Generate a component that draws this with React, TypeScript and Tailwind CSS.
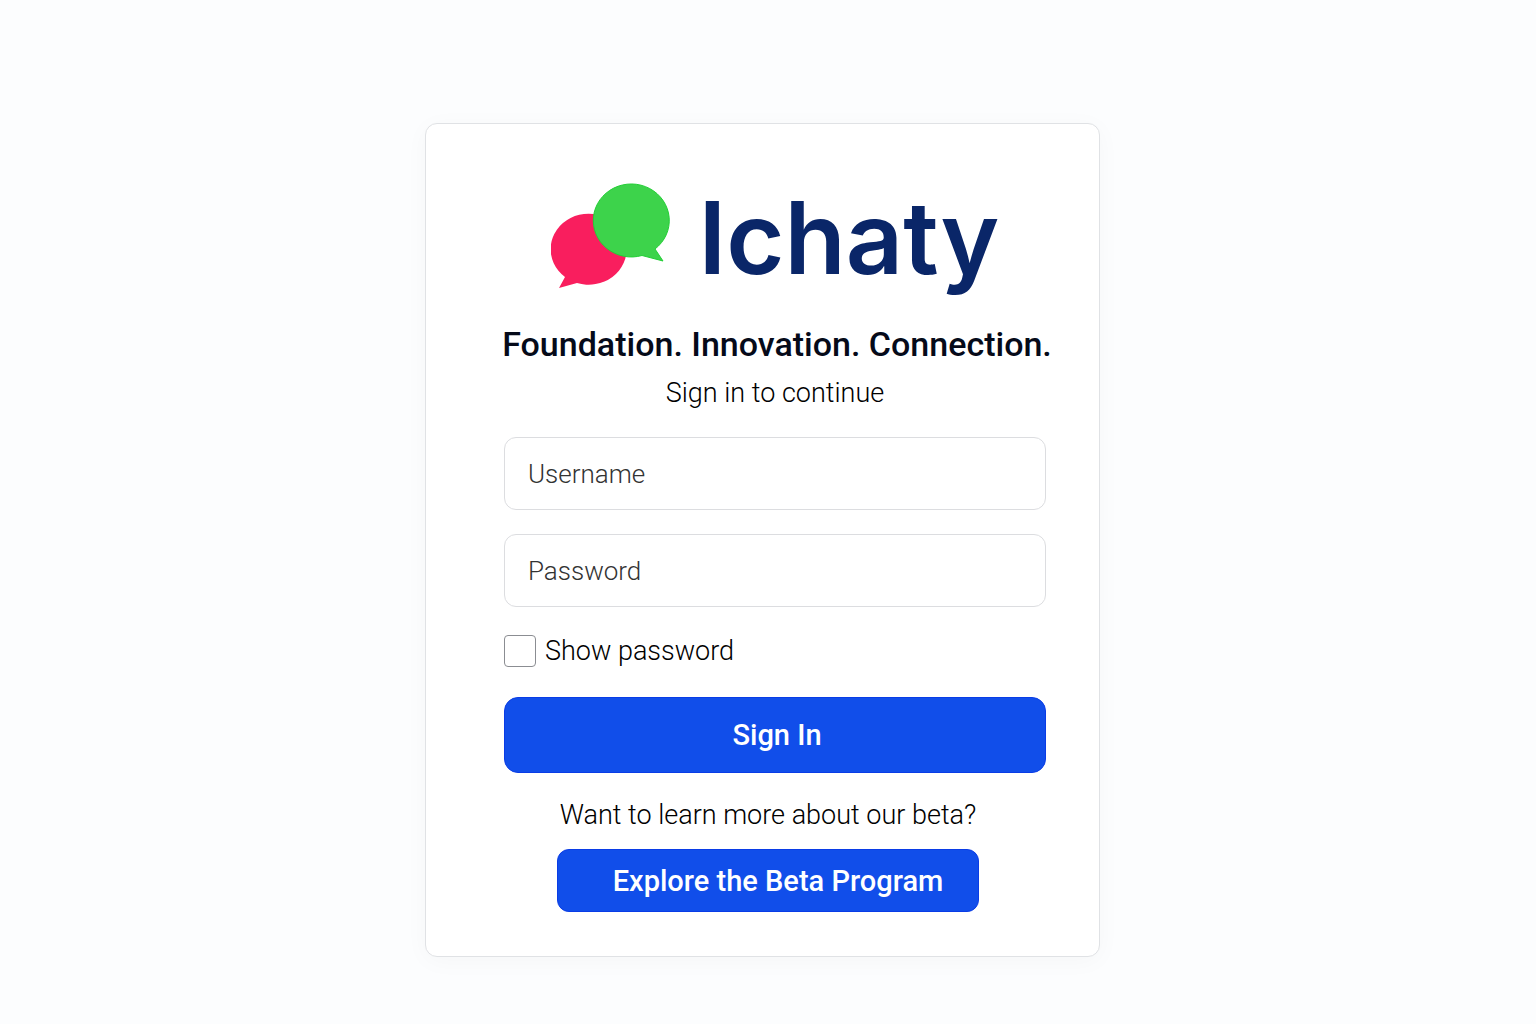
export default function App() {
  return (
    <main className="flex min-h-screen items-start justify-center bg-[#fcfdfe] pt-[123px] pr-[11px] font-[Roboto,sans-serif] text-[#050a19]">
      <section className="flex w-full max-w-[675px] flex-col rounded-xl border border-[#e0e2e5] bg-white pt-[59px] pr-[53px] pb-11 pl-[78px] shadow-[0_4px_24px_rgba(0,0,0,0.03)]">
        <header className="flex flex-col items-center">
          <div className="flex items-start gap-7">
            <svg className="h-[108px] w-[120px]" viewBox="0 0 120 108" aria-hidden="true">
              <path fill="#f91e5e" d="M14 94L8 105L26 100A38 35.5 0 1 0 14 94Z" />
              <path fill="#3dd34b" stroke="#22cf35" strokeWidth="1" d="M104 66L112 78L91 72.5A38 36.5 0 1 1 104 66Z" />
            </svg>
            <h1 className="font-[Inter,sans-serif] text-[100px] leading-[110px] font-semibold text-[#0a2668]">Ichaty</h1>
          </div>
          <p className="mt-[30px] pl-1 text-[34px] leading-[42px] font-medium whitespace-nowrap">Foundation. Innovation. Connection.</p>
          <p className="mt-2.5 text-[27px] leading-9 font-light text-black">Sign in to continue</p>
        </header>
        <form className="mt-[26px] flex flex-col">
          <input aria-label="Username" placeholder="Username" className="h-[73px] rounded-xl border border-[#dcdde0] px-[23px] text-[26px] font-light placeholder:text-[#333]" />
          <input aria-label="Password" type="password" placeholder="Password" className="mt-6 h-[73px] rounded-xl border border-[#dcdde0] px-[23px] text-[26px] font-light placeholder:text-[#333]" />
          <label className="mt-6 flex items-center gap-[9px] text-[27px] leading-10 font-light text-black">
            <input type="checkbox" className="size-8 appearance-none rounded border border-[#8b8d92] checked:bg-[#114eea]" />
            Show password
          </label>
          <button type="button" className="mt-[26px] h-[76px] rounded-[14px] border border-[#0a3ce6] bg-[#114eea] pt-0.5 pl-1 text-[29px] font-medium text-white">Sign In</button>
        </form>
        <footer className="mt-6 flex flex-col items-center pr-[14px]">
          <p className="text-[27px] leading-9 font-light text-black">Want to learn more about our beta?</p>
          <a href="#beta" className="mt-4 flex h-[63px] w-[422px] items-center justify-center rounded-xl border border-[#0a3ce6] bg-[#114eea] pt-0.5 pl-5 text-[29px] font-medium text-white">Explore the Beta Program</a>
        </footer>
      </section>
    </main>
  );
}
